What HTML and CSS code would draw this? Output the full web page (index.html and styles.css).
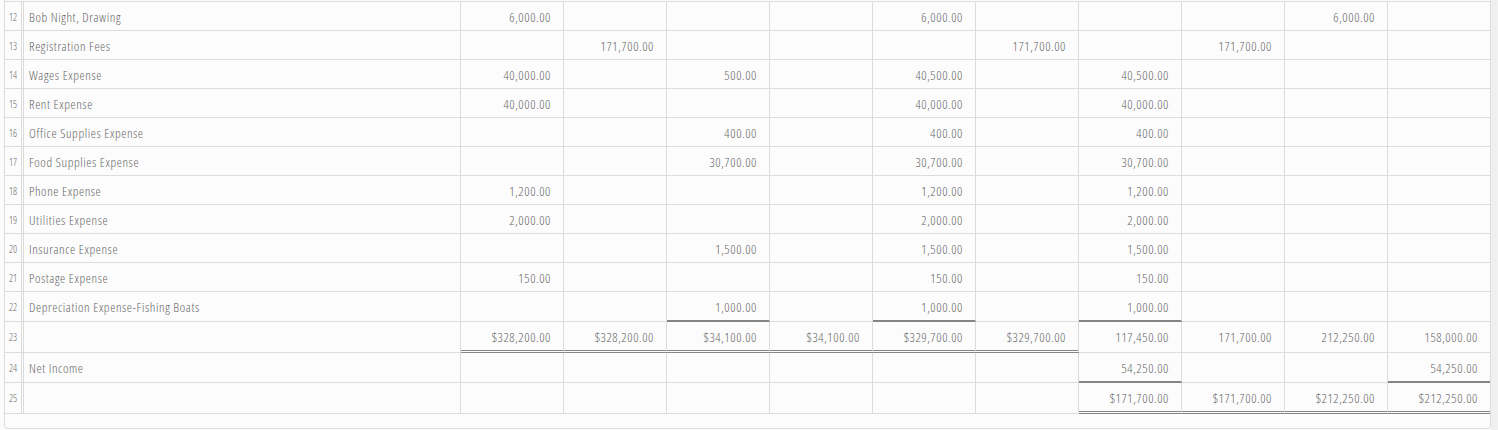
FILE: index.html
```html
<!DOCTYPE html>
<html>
<head>
<meta charset="utf-8">
<link rel="stylesheet" href="styles.css">
</head>
<body>
<div class="page">
  <div class="sheet">
    <table class="grid">
      <colgroup>
        <col class="c-num"><col class="c-label">
        <col class="c-val"><col class="c-val"><col class="c-val"><col class="c-val"><col class="c-val">
        <col class="c-val"><col class="c-val"><col class="c-val"><col class="c-val"><col class="c-last">
      </colgroup>
      <tbody>
        <tr><td class="num">12</td><td class="label">Bob Night, Drawing</td><td>6,000.00</td><td></td><td></td><td></td><td>6,000.00</td><td></td><td></td><td></td><td>6,000.00</td><td></td></tr>
        <tr><td class="num">13</td><td class="label">Registration Fees</td><td></td><td>171,700.00</td><td></td><td></td><td></td><td>171,700.00</td><td></td><td>171,700.00</td><td></td><td></td></tr>
        <tr><td class="num">14</td><td class="label">Wages Expense</td><td>40,000.00</td><td></td><td>500.00</td><td></td><td>40,500.00</td><td></td><td>40,500.00</td><td></td><td></td><td></td></tr>
        <tr><td class="num">15</td><td class="label">Rent Expense</td><td>40,000.00</td><td></td><td></td><td></td><td>40,000.00</td><td></td><td>40,000.00</td><td></td><td></td><td></td></tr>
        <tr><td class="num">16</td><td class="label">Office Supplies Expense</td><td></td><td></td><td>400.00</td><td></td><td>400.00</td><td></td><td>400.00</td><td></td><td></td><td></td></tr>
        <tr><td class="num">17</td><td class="label">Food Supplies Expense</td><td></td><td></td><td>30,700.00</td><td></td><td>30,700.00</td><td></td><td>30,700.00</td><td></td><td></td><td></td></tr>
        <tr><td class="num">18</td><td class="label">Phone Expense</td><td>1,200.00</td><td></td><td></td><td></td><td>1,200.00</td><td></td><td>1,200.00</td><td></td><td></td><td></td></tr>
        <tr><td class="num">19</td><td class="label">Utilities Expense</td><td>2,000.00</td><td></td><td></td><td></td><td>2,000.00</td><td></td><td>2,000.00</td><td></td><td></td><td></td></tr>
        <tr><td class="num">20</td><td class="label">Insurance Expense</td><td></td><td></td><td>1,500.00</td><td></td><td>1,500.00</td><td></td><td>1,500.00</td><td></td><td></td><td></td></tr>
        <tr><td class="num">21</td><td class="label">Postage Expense</td><td>150.00</td><td></td><td></td><td></td><td>150.00</td><td></td><td>150.00</td><td></td><td></td><td></td></tr>
        <tr><td class="num">22</td><td class="label">Depreciation Expense-Fishing Boats</td><td></td><td></td><td class="sum">1,000.00</td><td></td><td class="sum">1,000.00</td><td></td><td class="sum">1,000.00</td><td></td><td></td><td></td></tr>
        <tr><td class="num">23</td><td class="label"></td><td class="dbl">$328,200.00</td><td class="dbl">$328,200.00</td><td class="dbl">$34,100.00</td><td class="dbl">$34,100.00</td><td class="dbl">$329,700.00</td><td class="dbl">$329,700.00</td><td>117,450.00</td><td>171,700.00</td><td>212,250.00</td><td>158,000.00</td></tr>
        <tr><td class="num">24</td><td class="label">Net Income</td><td></td><td></td><td></td><td></td><td></td><td></td><td class="sum">54,250.00</td><td></td><td></td><td class="sum">54,250.00</td></tr>
        <tr><td class="num">25</td><td class="label"></td><td></td><td></td><td></td><td></td><td></td><td></td><td class="dbl">$171,700.00</td><td class="dbl">$171,700.00</td><td class="dbl">$212,250.00</td><td class="dbl">$212,250.00</td></tr>
      </tbody>
    </table>
  </div>
  <div class="rail"></div>
</div>
</body>
</html>
```
FILE: styles.css
```css
html, body {
  margin: 0;
  padding: 0;
  background: #fcfcfc;
}
.page {
  display: flex;
  align-items: flex-start;
  padding-left: 4px;
  height: 430px;
}
.sheet {
  box-sizing: border-box;
  width: 1487px;
  flex: none;
  border: 1px solid #dcdcdc;
  border-top: none;
  border-radius: 0 0 4px 4px;
  padding-bottom: 14px;
  background: #fcfcfc;
}
.rail {
  flex: 1;
  align-self: stretch;
  background: #f0f0f0;
}
.grid {
  table-layout: fixed;
  border-collapse: separate;
  border-spacing: 0;
  width: 1485px;
  margin-top: 1px;
  border-top: 1px solid #dcdcdc;
  font-family: "Open Sans", "Liberation Sans", Arial, sans-serif;
  font-stretch: 75%;
  font-weight: 300;
  font-size: 13px;
  letter-spacing: 0.6px;
  color: #666666;
}
.grid col.c-num { width: 19px; }
.grid col.c-label { width: 437px; }
.grid col.c-val { width: 103px; }
.grid col.c-last { width: 102px; }
.grid td {
  box-sizing: border-box;
  height: 29px;
  padding: 3px 12px 0 5px;
  line-height: 25px;
  text-align: right;
  white-space: nowrap;
  overflow: hidden;
  border-right: 1px solid #dcdcdc;
  border-bottom: 1px solid #dcdcdc;
  vertical-align: top;
}
.grid td:last-child {
  border-right: none;
}
.grid td.num {
  padding: 3px 0 0 0;
  text-align: center;
  font-size: 10px;
  letter-spacing: 0;
  color: #6a6a6a;
  border-right: 3px double #dcdcdc;
}
.grid td.label {
  text-align: left;
}
.grid td.sum {
  height: 30px;
  border-bottom: 2px solid #858585;
}
.grid td.dbl {
  height: 31px;
  border-bottom: 3px double #858585;
}
```
